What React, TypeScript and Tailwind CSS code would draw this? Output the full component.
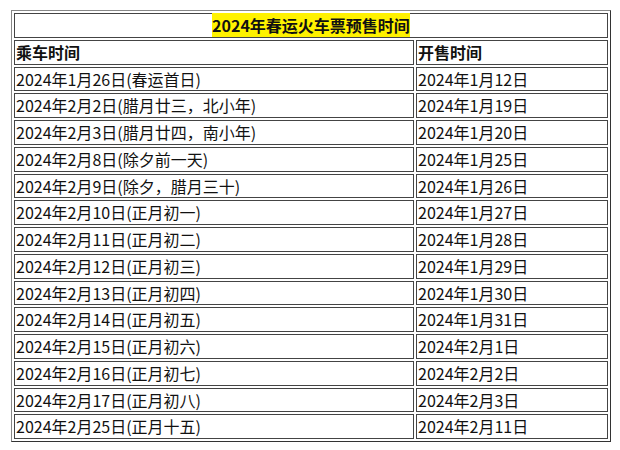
const rows: [string, string][] = [
  ["2024年1月26日(春运首日)", "2024年1月12日"],
  ["2024年2月2日(腊月廿三，北小年)", "2024年1月19日"],
  ["2024年2月3日(腊月廿四，南小年)", "2024年1月20日"],
  ["2024年2月8日(除夕前一天)", "2024年1月25日"],
  ["2024年2月9日(除夕，腊月三十)", "2024年1月26日"],
  ["2024年2月10日(正月初一)", "2024年1月27日"],
  ["2024年2月11日(正月初二)", "2024年1月28日"],
  ["2024年2月12日(正月初三)", "2024年1月29日"],
  ["2024年2月13日(正月初四)", "2024年1月30日"],
  ["2024年2月14日(正月初五)", "2024年1月31日"],
  ["2024年2月15日(正月初六)", "2024年2月1日"],
  ["2024年2月16日(正月初七)", "2024年2月2日"],
  ["2024年2月17日(正月初八)", "2024年2月3日"],
  ["2024年2月25日(正月十五)", "2024年2月11日"],
];

const cell = "border border-[#444] px-px py-0 leading-[22.75px] whitespace-nowrap";

export default function App() {
  return (
    <div className="min-h-[450px] w-[620px] bg-white pl-[11px] pt-[10px] text-[16px] text-[#111] [font-family:'Noto_Sans_CJK_SC','Noto_Sans',sans-serif]">
      <table className="w-[600px] table-fixed border-separate border-spacing-[2px] border border-t-[#888] border-l-[#888] border-r-[#333] border-b-[#333]">
        <colgroup>
          <col className="w-[400px]" />
          <col />
        </colgroup>
        <tbody>
          <tr>
            <td colSpan={2} className={`${cell} text-center`}>
              <span className="bg-[#fff200] font-bold">2024年春运火车票预售时间</span>
            </td>
          </tr>
          <tr>
            <td className={`${cell} font-bold`}>乘车时间</td>
            <td className={`${cell} font-bold`}>开售时间</td>
          </tr>
          {rows.map(([a, b]) => (
            <tr key={a}>
              <td className={cell}>{a}</td>
              <td className={cell}>{b}</td>
            </tr>
          ))}
        </tbody>
      </table>
    </div>
  );
}
